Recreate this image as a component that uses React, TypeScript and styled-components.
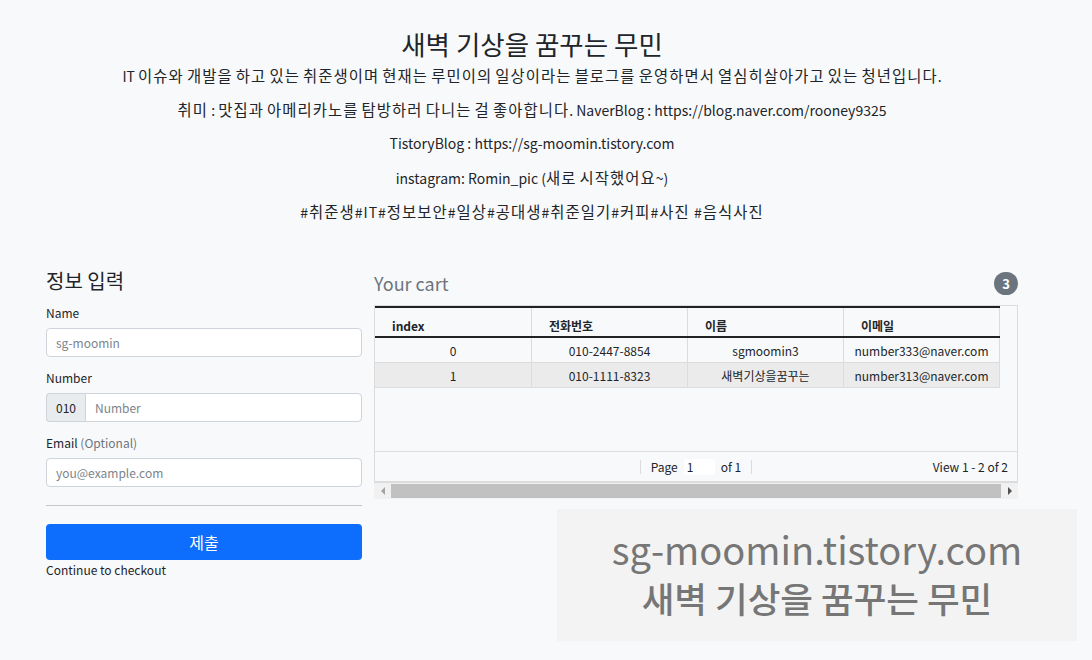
import React from 'react';
import styled, { createGlobalStyle } from 'styled-components';

const GlobalStyle = createGlobalStyle`
  html, body {
    margin: 0;
    padding: 0;
    background: #f8f9fa;
    color: #212529;
    font-family: "Noto Sans CJK KR", "Noto Sans", sans-serif;
  }
`;

const rows = [
  { index: 0, phone: '010-2447-8854', name: 'sgmoomin3', email: 'number333@naver.com' },
  { index: 1, phone: '010-1111-8323', name: '새벽기상을꿈꾸는', email: 'number313@naver.com' },
];

const columns = ['index', '전화번호', '이름', '이메일'];

const introLines = [
  'IT 이슈와 개발을 하고 있는 취준생이며 현재는 루민이의 일상이라는 블로그를 운영하면서 열심히살아가고 있는 청년입니다.',
  '취미 : 맛집과 아메리카노를 탐방하러 다니는 걸 좋아합니다. NaverBlog : https://blog.naver.com/rooney9325',
  'TistoryBlog : https://sg-moomin.tistory.com',
  'instagram: Romin_pic (새로 시작했어요~)',
  '#취준생#IT#정보보안#일상#공대생#취준일기#커피#사진 #음식사진',
];

// hangul runs get a little more room, the reference font sets them wider
const HANGUL = /([\u3131-\u318E\uAC00-\uD7A3]+)/;
const ko = (text: string) =>
  text.split(HANGUL).map((part, i) => (i % 2 === 1 ? <Ko key={i}>{part}</Ko> : part));

const App: React.FC = (): JSX.Element => {
  return (
    <Page>
      <GlobalStyle />
      <Intro>
        <Title>새벽 기상을 꿈꾸는 무민</Title>
        {introLines.map(l => (
          <Line key={l} tags={l.startsWith('#')}>
            {ko(l)}
          </Line>
        ))}
      </Intro>

      <Main>
        <FormColumn>
          <FormTitle>정보 입력</FormTitle>
          <Field>
            <Label>Name</Label>
            <TextInput placeholder="sg-moomin" />
          </Field>
          <Field>
            <Label>Number</Label>
            <InputGroup>
              <Prefix>010</Prefix>
              <TextInput placeholder="Number" grouped />
            </InputGroup>
          </Field>
          <Field>
            <Label>
              Email <Muted>(Optional)</Muted>
            </Label>
            <TextInput placeholder="you@example.com" />
          </Field>
          <Divider />
          <SubmitButton type="button">제출</SubmitButton>
          <Caption>Continue to checkout</Caption>
        </FormColumn>

        <CartColumn>
          <CartHeader>
            <CartTitle>Your cart</CartTitle>
            <Badge>3</Badge>
          </CartHeader>
          <Grid>
            <GridTable>
              <HeadRow>
                {columns.map(c => (
                  <HeadCell key={c}>{c}</HeadCell>
                ))}
              </HeadRow>
              {rows.map((r, i) => (
                <BodyRow key={r.index} striped={i % 2 === 1}>
                  <Cell>{r.index}</Cell>
                  <Cell>{r.phone}</Cell>
                  <Cell>{r.name}</Cell>
                  <Cell>{r.email}</Cell>
                </BodyRow>
              ))}
            </GridTable>
            <Filler />
            <Pager>
              <span />
              <PagerCenter>
                <Sep />
                Page <PageBox>1</PageBox> of 1
                <Sep />
              </PagerCenter>
              <PagerInfo>View 1 - 2 of 2</PagerInfo>
            </Pager>
          </Grid>
          <HScroll>
            <Arrow dir="left" />
            <Thumb />
            <Arrow dir="right" />
          </HScroll>
        </CartColumn>
      </Main>

      <Watermark>
        <WaterLine latin>sg-moomin.tistory.com</WaterLine>
        <WaterLine>새벽 기상을 꿈꾸는 무민</WaterLine>
      </Watermark>
    </Page>
  );
};
export default App;

const Page = styled.div`
  position: relative;
  width: 1092px;
  height: 660px;
  overflow: hidden;
`;

const Intro = styled.header`
  padding: 29px 28px 0 0;
  text-align: center;
`;

const Title = styled.h2`
  margin: 0 0 8px;
  font-size: 26.5px;
  line-height: 29px;
  font-weight: 400;
`;

const Line = styled.p<{ tags?: boolean }>`
  margin: 0 0 16px;
  height: 18px;
  font-size: 14px;
  line-height: 18px;
  letter-spacing: ${p => (p.tags ? '1px' : 'normal')};
`;

const Ko = styled.span`
  font-size: 1.1em;
  letter-spacing: 0.07em;
`;

const Main = styled.main`
  display: flex;
  gap: 12px;
  margin-top: 49px;
  padding-left: 46px;
`;

const FormColumn = styled.section`
  width: 316px;
  display: flex;
  flex-direction: column;
`;

const FormTitle = styled.h4`
  margin: 0 0 12px;
  font-size: 20px;
  line-height: 24px;
  font-weight: 400;
`;

const Field = styled.div`
  display: flex;
  flex-direction: column;
  margin-bottom: 13px;
`;

const Label = styled.label`
  font-size: 12px;
  line-height: 16px;
  margin-bottom: 7px;
`;

const Muted = styled.span`
  color: #6c757d;
`;

const TextInput = styled.input<{ grouped?: boolean }>`
  box-sizing: border-box;
  width: ${p => (p.grouped ? 'auto' : '100%')};
  min-width: 0;
  height: 29px;
  flex: ${p => (p.grouped ? '1 1 auto' : 'none')};
  padding: 0 9px;
  border: 1px solid #ced4da;
  border-radius: ${p => (p.grouped ? '0 4px 4px 0' : '4px')};
  background: #fff;
  font: inherit;
  font-size: 12px;
  color: #212529;
  &::placeholder {
    color: #7d848b;
  }
`;

const InputGroup = styled.div`
  display: flex;
  height: 29px;
`;

const Prefix = styled.span`
  box-sizing: border-box;
  display: flex;
  align-items: center;
  flex: none;
  height: 29px;
  padding: 0 9px;
  background: #e9ecef;
  border: 1px solid #ced4da;
  border-right: none;
  border-radius: 4px 0 0 4px;
  font-size: 12px;
`;

const Divider = styled.hr`
  margin: 5px 0 18px;
  border: none;
  border-top: 1px solid #c6c8ca;
`;

const SubmitButton = styled.button`
  height: 36px;
  border: none;
  border-radius: 4px;
  background: #0d6efd;
  color: #fff;
  font: inherit;
  font-size: 16px;
`;

const Caption = styled.div`
  margin-top: 2px;
  font-size: 12px;
  line-height: 16px;
`;

const CartColumn = styled.section`
  width: 644px;
`;

const CartHeader = styled.div`
  display: flex;
  justify-content: space-between;
  align-items: center;
  height: 24px;
  margin: 2px 0 10px;
`;

const CartTitle = styled.h4`
  margin: 0;
  font-size: 18px;
  font-weight: 400;
  color: #6c757d;
`;

const Badge = styled.span`
  display: flex;
  align-items: center;
  justify-content: center;
  width: 24px;
  height: 23px;
  border-radius: 12px;
  background: #6c757d;
  color: #fff;
  font-size: 13px;
  font-weight: 700;
`;

const Grid = styled.div`
  box-sizing: border-box;
  height: 178px;
  display: flex;
  flex-direction: column;
  border: 1px solid #dcdcdc;
  border-bottom: none;
`;

const GridTable = styled.div`
  width: 625px;
`;

const HeadRow = styled.div`
  display: grid;
  grid-template-columns: 157px 156px 156px 156px;
  height: 32px;
  box-sizing: border-box;
  border-top: 2px solid #222;
  border-bottom: 2px solid #222;
`;

const HeadCell = styled.div`
  padding: 9px 0 0 17px;
  font-size: 12px;
  font-weight: 700;
  border-right: 1px solid #dcdcdc;
`;

const BodyRow = styled.div<{ striped?: boolean }>`
  display: grid;
  grid-template-columns: 157px 156px 156px 156px;
  height: 25px;
  box-sizing: border-box;
  background: ${p => (p.striped ? '#ebebeb' : 'transparent')};
  border-bottom: 1px solid #dcdcdc;
`;

const Cell = styled.div`
  display: flex;
  align-items: center;
  justify-content: center;
  font-size: 12px;
  border-right: 1px solid #dcdcdc;
`;

const Filler = styled.div`
  flex: 1;
`;

const Pager = styled.div`
  display: grid;
  grid-template-columns: 1fr auto 1fr;
  align-items: center;
  height: 32px;
  box-sizing: border-box;
  border-top: 1px solid #dcdcdc;
  border-bottom: 2px solid #dcdcdc;
  font-size: 12px;
`;

const PagerCenter = styled.div`
  display: flex;
  align-items: center;
  gap: 6px;
`;

const Sep = styled.span`
  width: 1px;
  height: 14px;
  background: #dcdcdc;
  margin: 0 4px;
`;

const PageBox = styled.span`
  display: inline-flex;
  align-items: center;
  width: 28px;
  height: 16px;
  padding-left: 3px;
  background: #fff;
  border-radius: 3px;
`;

const PagerInfo = styled.div`
  text-align: right;
  padding-right: 9px;
`;

const HScroll = styled.div`
  display: flex;
  align-items: center;
  height: 16px;
  background: #f1f1f1;
`;

const Arrow = styled.span<{ dir: 'left' | 'right' }>`
  width: 17px;
  display: flex;
  justify-content: center;
  &::before {
    content: '';
    border-top: 4px solid transparent;
    border-bottom: 4px solid transparent;
    ${p =>
      p.dir === 'left'
        ? 'border-right: 4px solid #a3a3a3;'
        : 'border-left: 4px solid #505050;'}
  }
`;

const Thumb = styled.span`
  flex: 1;
  height: 14px;
  background: #c1c1c1;
`;

const Watermark = styled.div`
  position: absolute;
  left: 557px;
  top: 509px;
  box-sizing: border-box;
  width: 520px;
  height: 132px;
  padding-top: 19px;
  background: #f3f3f3;
  display: flex;
  flex-direction: column;
  align-items: center;
`;

const WaterLine = styled.div<{ latin?: boolean }>`
  font-size: ${p => (p.latin ? '38px' : '35.5px')};
  line-height: ${p => (p.latin ? '42px' : '45px')};
  margin-bottom: ${p => (p.latin ? '5px' : '0')};
  color: #767676;
  font-weight: ${p => (p.latin ? 400 : 500)};
`;
